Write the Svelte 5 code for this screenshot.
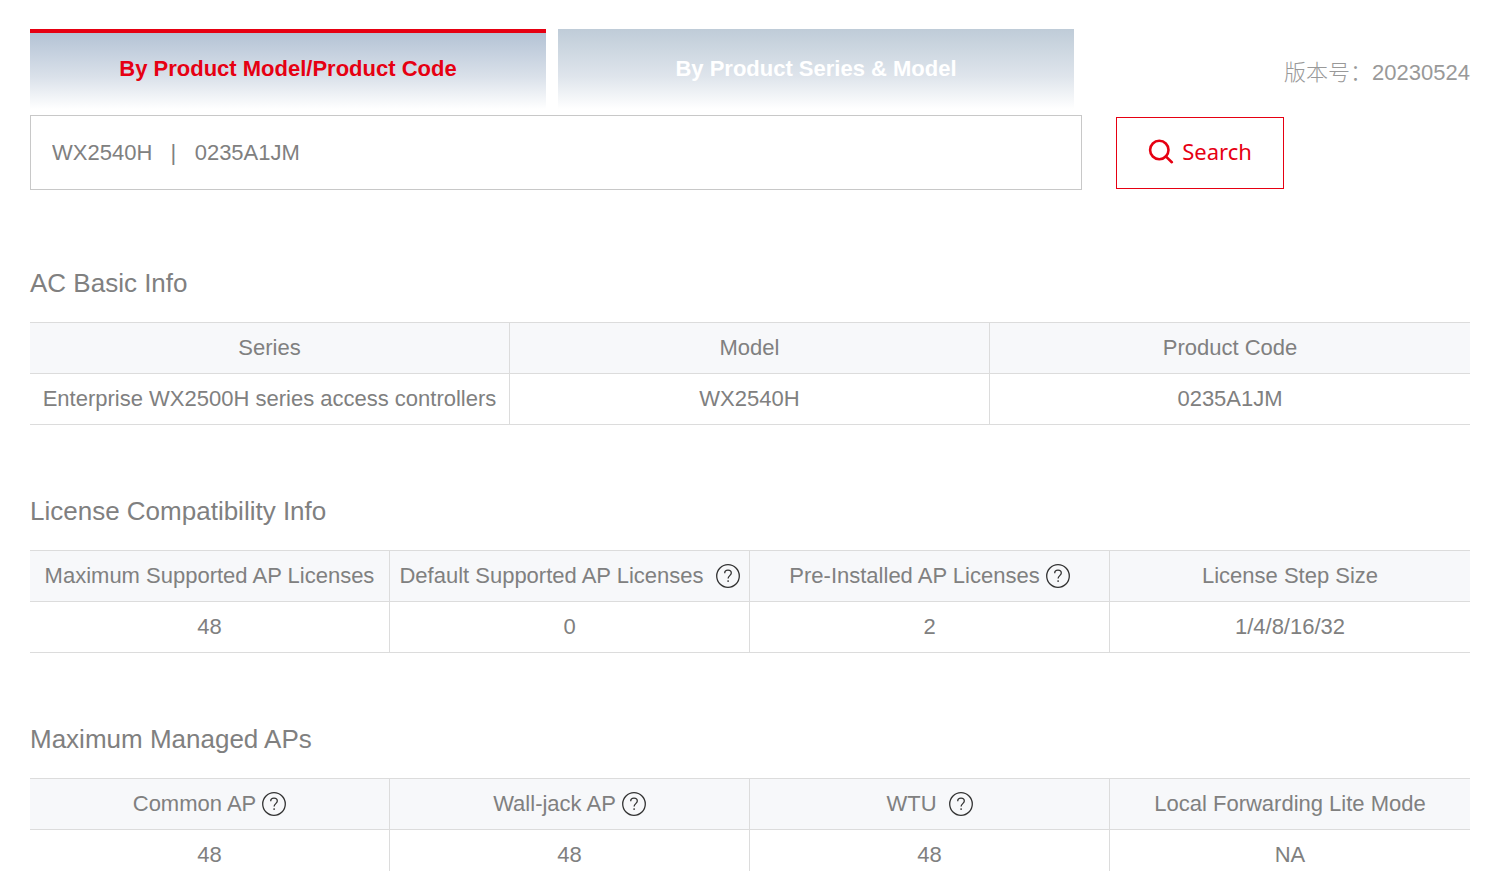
<script>
  // Which search tab is open
  let activeTab = $state('code');
  let keyword = $state('WX2540H   |   0235A1JM');

  const version = '20230524';

  const tabs = [
    { id: 'code', label: 'By Product Model/Product Code' },
    { id: 'series', label: 'By Product Series & Model' }
  ];

  // hint: shows the question mark, wide: leaves a bigger gap before it
  const sections = [
    {
      title: 'AC Basic Info',
      columns: [{ label: 'Series' }, { label: 'Model' }, { label: 'Product Code' }],
      rows: [['Enterprise WX2500H series access controllers', 'WX2540H', '0235A1JM']]
    },
    {
      title: 'License Compatibility Info',
      columns: [
        { label: 'Maximum Supported AP Licenses' },
        { label: 'Default Supported AP Licenses', hint: true, wide: true },
        { label: 'Pre-Installed AP Licenses', hint: true },
        { label: 'License Step Size' }
      ],
      rows: [['48', '0', '2', '1/4/8/16/32']]
    },
    {
      title: 'Maximum Managed APs',
      columns: [
        { label: 'Common AP', hint: true },
        { label: 'Wall-jack AP', hint: true },
        { label: 'WTU', hint: true, wide: true },
        { label: 'Local Forwarding Lite Mode' }
      ],
      rows: [['48', '48', '48', 'NA']]
    }
  ];
</script>

<main class="page">
  <header class="top">
    <div class="tabs">
      {#each tabs as tab}
        <button
          type="button"
          class="tab"
          class:active={activeTab === tab.id}
          aria-pressed={activeTab === tab.id}
          onclick={() => (activeTab = tab.id)}
        >
          {tab.label}
        </button>
      {/each}
    </div>
    <p class="version">版本号：{version}</p>
  </header>

  <form class="search" onsubmit={(e) => e.preventDefault()}>
    <input type="text" aria-label="Product model or code" bind:value={keyword} />
    <button type="submit" class="search-btn">
      <svg width="26" height="26" viewBox="0 0 26 26" aria-hidden="true">
        <circle cx="11.3" cy="12" r="9.2" />
        <path d="M17.8 18.4l6 5.8" />
      </svg>
      Search
    </button>
  </form>

  {#each sections as section}
    <section>
      <h2>{section.title}</h2>
      <table>
        <thead>
          <tr>
            {#each section.columns as col}
              <th scope="col">
                <span class="head" class:wide={col.wide}>
                  {col.label}
                  {#if col.hint}
                    <svg class="hint" width="24" height="24" viewBox="0 0 24 24" aria-hidden="true">
                      <circle cx="12" cy="12" r="11.3" />
                      <path d="M8.7 9.2c0-2.1 1.4-3.1 3.3-3.1s3.3 1.1 3.3 2.9c0 2.5-3.2 2.8-3.2 5.5" />
                      <path d="M12.1 16.2v1.7" />
                    </svg>
                  {/if}
                </span>
              </th>
            {/each}
          </tr>
        </thead>
        <tbody>
          {#each section.rows as row}
            <tr>
              {#each row as cell}
                <td>{cell}</td>
              {/each}
            </tr>
          {/each}
        </tbody>
      </table>
    </section>
  {/each}
</main>

<style>
  :global(body) {
    background: #fff;
  }

  .page {
    padding: 29px 22px 0 30px;
    font-family: Arial, "Liberation Sans", "Noto Sans CJK SC", sans-serif;
    font-size: 22px;
    line-height: 30px;
    color: #808080;
  }

  .top {
    display: flex;
    justify-content: space-between;
    align-items: center;
    margin-bottom: 6px;
  }

  .tabs {
    display: flex;
    flex: 0 1 1044px;
    gap: 12px;
  }

  .tab {
    flex: 1;
    height: 80px;
    padding: 0;
    border: 0;
    background: linear-gradient(#bfccd8, #dfe5ec 60%, #fff);
    color: #fff;
    font: inherit;
    font-weight: bold;
    cursor: pointer;
  }

  .tab.active {
    background: linear-gradient(#e60012 4px, #b4c3d5 4px, #dae1ea 60%, #fff);
    color: #e60012;
  }

  .version {
    margin: 8px 0 0;
    color: #999;
    font-weight: 300;
  }

  .search {
    display: flex;
    align-items: center;
    gap: 34px;
  }

  .search input {
    flex: 0 1 1052px;
    min-width: 0;
    height: 75px;
    box-sizing: border-box;
    padding: 0 21px;
    border: 1px solid #c8c8c8;
    outline: none;
    color: #808080;
    font: inherit;
  }

  .search-btn {
    display: flex;
    align-items: center;
    justify-content: center;
    gap: 8px;
    width: 168px;
    height: 72px;
    padding: 0 0 3px;
    border: 1px solid #e60012;
    background: #fff;
    color: #e60012;
    font-family: "Noto Sans", "Open Sans", sans-serif;
    font-size: 22px;
    cursor: pointer;
  }

  .search-btn svg {
    fill: none;
    stroke: #e60012;
    stroke-width: 2.6;
    stroke-linecap: round;
  }

  h2 {
    margin: 0 0 24px;
    padding-top: 71px;
    font-size: 26px;
    font-weight: normal;
    line-height: 30px;
  }

  .search + section h2 {
    padding-top: 78px;
  }

  table {
    width: 100%;
    table-layout: fixed;
    border-collapse: separate;
    border-spacing: 0;
    border-top: 1px solid #dcdcdc;
  }

  th,
  td {
    padding: 10px 0;
    border-right: 1px solid #dcdcdc;
    border-bottom: 1px solid #dcdcdc;
    font-weight: normal;
    text-align: center;
    white-space: nowrap;
  }

  th:last-child,
  td:last-child {
    border-right: 0;
  }

  th {
    background: #f7f8fa;
  }

  .head {
    display: flex;
    align-items: center;
    justify-content: center;
    gap: 6px;
  }

  .head.wide {
    gap: 12px;
  }

  .hint {
    flex: none;
    fill: none;
    stroke: #333;
    stroke-width: 1.3;
  }
</style>
